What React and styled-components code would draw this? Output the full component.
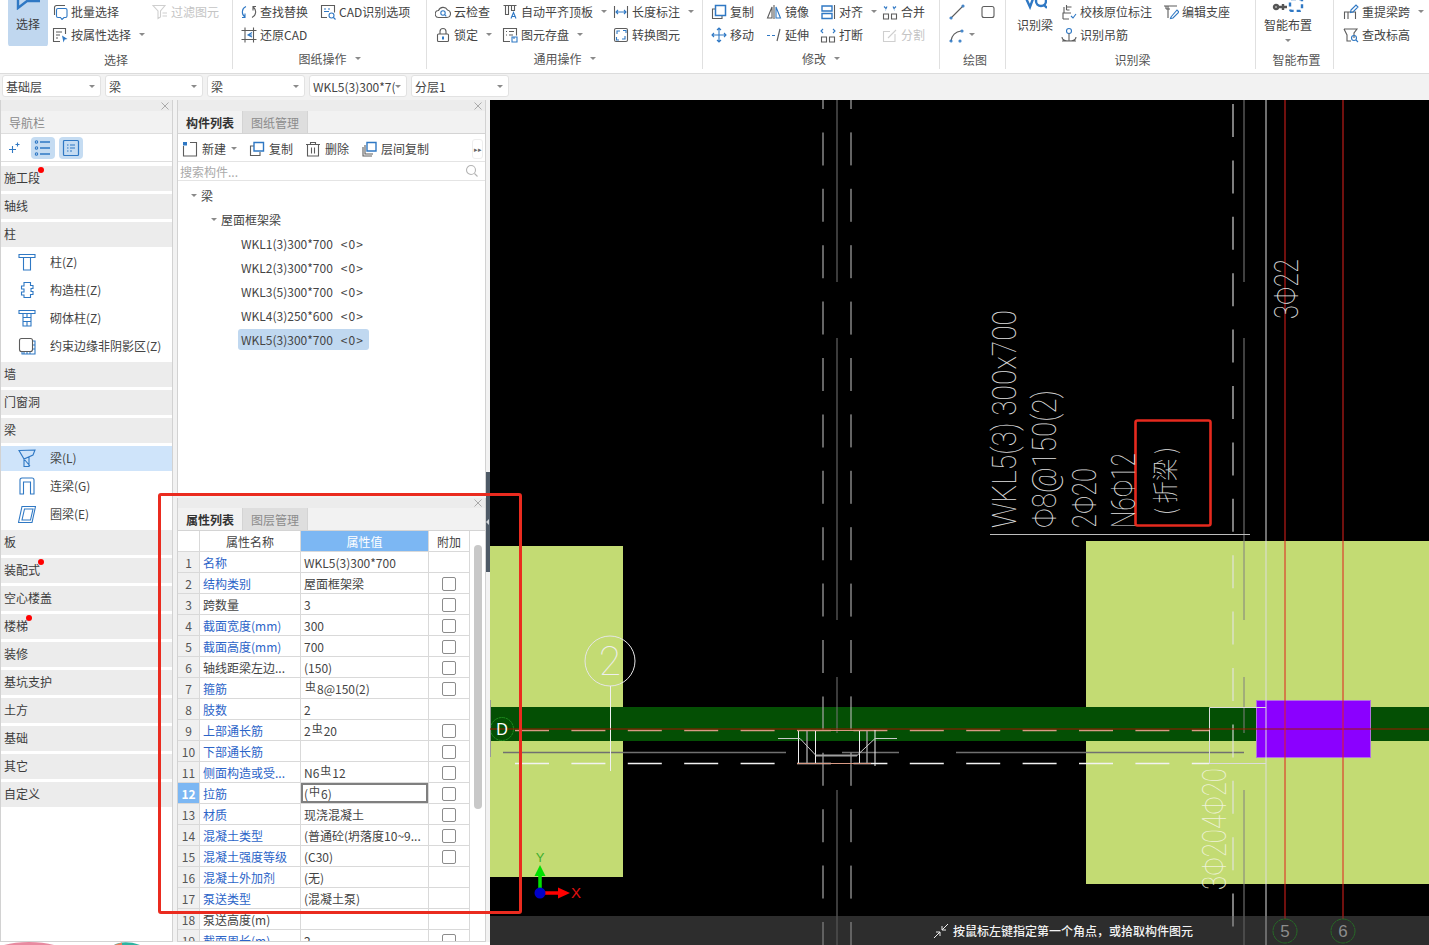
import React from "react";
import styled, { createGlobalStyle } from "styled-components";

const GlobalStyle = createGlobalStyle`
  html, body {
    margin: 0;
    padding: 0;
    background: #f2f2f2;
  }
  * {
    box-sizing: border-box;
  }
`;

const FONT = `"Noto Sans CJK SC", "Liberation Sans", sans-serif`;

const Page = styled.div`
  position: relative;
  width: 1429px;
  height: 945px;
  overflow: hidden;
  display: flex;
  flex-direction: column;
  font-family: ${FONT};
  font-size: 12px;
  color: #444;
  background: #f2f2f2;
`;

/* ---------- ribbon ---------- */

const Ribbon = styled.div`
  display: flex;
  height: 74px;
  flex: none;
  background: #fff;
  border-bottom: 1px solid #dcdcdc;
`;

const Group = styled.div`
  width: ${(p) => p.$w}px;
  flex: none;
  height: 69px;
  display: flex;
  flex-direction: column;
  border-right: ${(p) => (p.$last ? "none" : "1px solid #e0e0e0")};
`;

const GroupBody = styled.div`
  height: 46px;
  flex: none;
  display: flex;
  padding-left: ${(p) => p.$pl || 0}px;
  overflow: hidden;
`;

const GroupLabel = styled.div`
  flex: 1;
  display: flex;
  align-items: center;
  justify-content: center;
  gap: 8px;
  padding-top: ${(p) => (p.$caret ? 2 : 5)}px;
  padding-left: ${(p) => p.$shift || 0}px;
  line-height: 14px;
  color: #555;
`;

const Column = styled.div`
  width: ${(p) => p.$w}px;
  flex: none;
  display: flex;
  flex-direction: column;
`;

const ToolItem = styled.div`
  height: 23px;
  display: flex;
  align-items: center;
  gap: 3px;
  white-space: nowrap;
  line-height: 14px;
  color: ${(p) => (p.$off ? "#c4c4c4" : "#444")};
`;

const Caret = styled.span`
  width: 0;
  height: 0;
  flex: none;
  margin-left: ${(p) => p.$ml ?? 5}px;
  border-left: 3px solid transparent;
  border-right: 3px solid transparent;
  border-top: 3px solid #8a8a8a;
`;

const Glyph = styled.svg`
  width: ${(p) => p.$s || 16}px;
  height: ${(p) => p.$s || 16}px;
  flex: none;
  display: block;
  fill: none;
  stroke: ${(p) => (p.$off ? "#cfcfcf" : "#5c5c5c")};
  stroke-width: 1.1;
  .b {
    stroke: ${(p) => (p.$off ? "#cfcfcf" : "#2f78c4")};
  }
  .f {
    fill: #2f78c4;
    stroke: none;
  }
`;

const SelectButton = styled.div`
  width: 40px;
  height: 47px;
  flex: none;
  margin-right: 4px;
  background: #c0d7ef;
  border-radius: 0 0 4px 4px;
  display: flex;
  flex-direction: column;
  align-items: center;
  color: #3d3d3d;
`;

const BigTool = styled.div`
  width: ${(p) => p.$w}px;
  margin-right: ${(p) => p.$mr || 0}px;
  flex: none;
  display: flex;
  flex-direction: column;
  align-items: center;
  line-height: 15px;
  white-space: nowrap;
`;

const BigGlyph = styled.svg`
  width: ${(p) => p.$w}px;
  height: ${(p) => p.$h}px;
  flex: none;
  display: block;
  fill: none;
  stroke: #2f78c4;
  stroke-width: 2.4;
  margin-bottom: ${(p) => p.$mb || 0}px;
  .d {
    stroke: #555;
  }
`;

const SmartCaret = styled(Caret)`
  margin-top: 7px;
`;

/* ---------- selector strip ---------- */

const SelectBar = styled.div`
  height: 26px;
  flex: none;
  display: flex;
  gap: 4px;
  padding: 1px 0 0 2px;
  background: #f2f2f2;
`;

const Picker = styled.div`
  width: ${(p) => p.$w || 98}px;
  height: 22px;
  display: flex;
  align-items: center;
  justify-content: space-between;
  padding: 0 5px 0 3px;
  background: #fff;
  border: 1px solid #e2e2e2;
  border-radius: 3px;
  white-space: nowrap;
  overflow: hidden;
`;

const PickerText = styled.span`
  overflow: hidden;
  width: ${(p) => (p.$clip ? "82px" : "auto")};
`;

/* ---------- main area ---------- */

const Main = styled.div`
  flex: 1;
  min-height: 0;
  display: flex;
`;

const LeftArea = styled.div`
  position: relative;
  width: 490px;
  flex: none;
  display: flex;
  flex-direction: column;
`;

const PanelRow = styled.div`
  flex: 1;
  min-height: 0;
  display: flex;
  gap: 4px;
`;

const Wallpaper = styled.svg`
  display: block;
  width: 490px;
  height: 3px;
  flex: none;
  background: #fff;
`;

const NavPanel = styled.div`
  width: 173px;
  flex: none;
  background: #fff;
  border: 1px solid #d2d2d2;
  border-top: none;
  display: flex;
  flex-direction: column;
`;

const Strip = styled.div`
  height: ${(p) => p.$h || 11}px;
  flex: none;
  display: flex;
  align-items: center;
  justify-content: flex-end;
  padding-right: 3px;
  background: #ececec;
  color: #a8a8a8;
`;

const CloseGlyph = styled.svg`
  width: 8px;
  height: 8px;
  stroke: #aaa;
  stroke-width: 1;
  fill: none;
`;

const NavTitle = styled.div`
  height: 23px;
  flex: none;
  padding-left: 8px;
  display: flex;
  align-items: center;
  background: #f2f2f2;
  border-bottom: 1px solid #dedede;
  color: #8a8a8a;
`;

const NavTools = styled.div`
  height: 28px;
  flex: none;
  display: flex;
  align-items: center;
  padding-left: 7px;
  gap: 4px;
  border-bottom: 1px solid #dedede;
  margin-bottom: 4px;
`;

const NavToolButton = styled.div`
  width: 24px;
  height: 22px;
  display: flex;
  align-items: center;
  justify-content: center;
  background: #c5dcf2;
  border-radius: 4px;
  margin-left: ${(p) => p.$ml || 0}px;
`;

const NavSection = styled.div`
  position: relative;
  height: 25px;
  flex: none;
  margin-bottom: 3px;
  padding: 0 0 2px 3px;
  display: flex;
  align-items: center;
  background: #ececec;
  color: #3c3c3c;
`;

const RedDot = styled.span`
  position: absolute;
  top: 1px;
  left: ${(p) => p.$x}px;
  width: 6px;
  height: 6px;
  border-radius: 50%;
  background: #f00;
`;

const NavItem = styled.div`
  height: 25px;
  flex: none;
  margin-bottom: 3px;
  display: flex;
  align-items: center;
  padding: 0 0 2px 17px;
  gap: 14px;
  white-space: nowrap;
  background: ${(p) => (p.$active ? "#cfe4fa" : "transparent")};
`;

const MidColumn = styled.div`
  width: 309px;
  flex: none;
  display: flex;
  flex-direction: column;
  gap: 4px;
`;

const ListPanel = styled.div`
  flex: 1;
  min-height: 0;
  background: #fff;
  border-left: 1px solid #d2d2d2;
  border-right: 1px solid #d2d2d2;
  display: flex;
  flex-direction: column;
`;

const TabRow = styled.div`
  height: 23px;
  flex: none;
  display: flex;
  background: #f2f2f2;
  border-bottom: 1px solid #d4d4d4;
`;

const Tab = styled.div`
  width: ${(p) => p.$w}px;
  display: flex;
  align-items: center;
  justify-content: center;
  font-weight: ${(p) => (p.$on ? 700 : 400)};
  color: ${(p) => (p.$on ? "#333" : "#8c8c8c")};
  background: ${(p) => (p.$on ? "#f2f2f2" : "#dedede")};
  border-right: 1px solid #d4d4d4;
`;

const ListTools = styled.div`
  height: 28px;
  flex: none;
  display: flex;
  align-items: center;
  gap: 12px;
  padding: 2px 2px 0 4px;
  border-bottom: 1px solid #e4e4e4;
`;

const ListTool = styled.div`
  display: flex;
  align-items: center;
  gap: 4px;
  white-space: nowrap;
`;

const ExpandButton = styled.div`
  margin-left: auto;
  width: 11px;
  height: 20px;
  border: 1px solid #eee;
  border-radius: 3px;
  font-size: 7px;
  line-height: 18px;
  text-align: center;
  color: #666;
`;

const SearchRow = styled.div`
  height: 19px;
  flex: none;
  display: flex;
  align-items: center;
  justify-content: space-between;
  padding: 0 5px 0 2px;
  color: #aaa;
  border-bottom: 1px solid #e4e4e4;
`;

const Tree = styled.div`
  padding-top: 2px;
  display: flex;
  flex-direction: column;
`;

const TreeRow = styled.div`
  height: 24px;
  display: flex;
  align-items: center;
  gap: 4px;
  padding-left: ${(p) => p.$indent}px;
`;

const Leaf = styled.div`
  height: 21px;
  display: flex;
  align-items: center;
  gap: 8px;
  padding: 0 5px 0 3px;
  border-radius: 3px;
  background: ${(p) => (p.$on ? "#c0d8f0" : "transparent")};
`;

const Count = styled.span`
  font-size: 12px;
  letter-spacing: 1px;
`;

const AttrPanel = styled.div`
  height: 444px;
  flex: none;
  background: #fff;
  border-left: 1px solid #d2d2d2;
  border-right: 1px solid #d2d2d2;
  border-bottom: 1px solid #d2d2d2;
  display: flex;
  flex-direction: column;
  overflow: hidden;
`;

const AttrBody = styled.div`
  position: relative;
  flex: 1;
  min-height: 0;
  overflow: hidden;
`;

const PropRow = styled.div`
  display: grid;
  grid-template-columns: 22px 101px 128px 41px;
  height: 21px;
`;

const PropCell = styled.div`
  display: flex;
  align-items: center;
  padding-left: ${(p) => p.$pl ?? 3}px;
  justify-content: ${(p) => (p.$center ? "center" : "flex-start")};
  border-right: 1px solid #d9d9d9;
  border-bottom: 1px solid #d9d9d9;
  white-space: nowrap;
  overflow: hidden;
  color: ${(p) => (p.$link ? "#2c64c8" : "#444")};
`;

const HeadCell = styled(PropCell)`
  background: ${(p) => (p.$on ? "#7cb7f3" : "#fff")};
  color: ${(p) => (p.$on ? "#fff" : "#444")};
`;

const NumCell = styled(PropCell)`
  padding-left: 0;
  justify-content: center;
  background: ${(p) => (p.$on ? "#7cb7f3" : "#f0f0f0")};
  color: ${(p) => (p.$on ? "#fff" : "#555")};
  font-weight: ${(p) => (p.$on ? 700 : 400)};
`;

const ValueCell = styled(PropCell)`
  box-shadow: ${(p) => (p.$on ? "inset 0 0 0 2px #7f7f7f" : "none")};
`;

const Rebar = styled.span`
  font-size: 11px;
  position: relative;
  top: -2px;
  margin: 0 1px;
`;

const Check = styled.span`
  width: 14px;
  height: 14px;
  margin-top: 1px;
  border: 1px solid #8c8c8c;
  border-radius: 2px;
  background: #fff;
`;

const Thumb = styled.div`
  position: absolute;
  left: 296px;
  top: 14px;
  width: 8px;
  height: 264px;
  border-radius: 4px;
  background: #c8c8c8;
`;

const Splitter = styled.div`
  position: absolute;
  right: 0;
  top: 372px;
  width: 4px;
  height: 100px;
  background: #4e5a66;
  display: flex;
  align-items: center;

  &::after {
    content: "";
    border-top: 3px solid transparent;
    border-bottom: 3px solid transparent;
    border-right: 3px solid #cfd4d8;
  }
`;

/* ---------- canvas ---------- */

const Canvas = styled.div`
  position: relative;
  flex: 1;
  background: #000;
  overflow: hidden;
`;

const Drawing = styled.svg`
  display: block;
  width: 939px;
  height: 845px;
`;

const CadText = styled.text`
  font-family: Roboto, "Liberation Sans", sans-serif;
  font-weight: 100;
  fill: ${(p) => p.$c || "#e0e0e0"};
`;

const CadCjk = styled(CadText)`
  font-family: "Noto Sans CJK SC", sans-serif;
  font-weight: 100;
`;

const StatusBar = styled.div`
  position: absolute;
  left: 0;
  right: 0;
  bottom: 0;
  height: 29px;
  display: flex;
  align-items: center;
  gap: 4px;
  padding-left: 443px;
  color: #f2f2f2;
  font-weight: 500;
`;

const RedFrame = styled.div`
  position: absolute;
  left: 158px;
  top: 493px;
  width: 364px;
  height: 421px;
  border: 3px solid #ea2b1f;
  border-radius: 3px;
  pointer-events: none;
`;

/* ---------- icons ---------- */

const icons = {
  batch: (
    <>
      <path d="M2.500 11V3.500a2 2 0 0 1 2-2H13" />
      <path className="b" d="M6 4.500h7.500a1.500 1.500 0 0 1 1.500 1.500v6a1.500 1.500 0 0 1-1.500 1.500H12l-2 2-1.500-2H6A1.500 1.500 0 0 1 4.500 12V6A1.500 1.500 0 0 1 6 4.500z" />
    </>
  ),
  attr: (
    <>
      <path d="M13.500 7V1.500h-12v13H8" />
      <path d="M4 5h6M4 8h4M4 11h2" />
      <path className="f" d="M10 8.500l5.500 3.500-2.800.6-1.200 2.900z" />
    </>
  ),
  filter: <path d="M1 1.500h12L8.500 7v6L6 14.500V7zM10.500 9H15M10.500 12H15" />,
  replace: (
    <>
      <path className="b" d="M5 2.500A6 6 0 0 0 4 13M4 9.500V13.500H1" />
      <path d="M11 13.500A6 6 0 0 0 12 3M12 6.500V2.500h3" />
    </>
  ),
  restore: (
    <>
      <path d="M4 .5v15M12.500.5v15M.5 3.500h15M.5 12.500h15" />
      <path className="b" d="M11 5.500L7 8l4 2M7 8h4" />
    </>
  ),
  cadOpt: (
    <>
      <path d="M7 13.500H1.500v-12h13v7" />
      <path className="b" d="M4 5h2M8 5h2M4 7.500h5" />
      <circle className="b" cx="11.500" cy="11.500" r="2.500" />
      <path className="b" d="M13.500 13.500l2 2" />
    </>
  ),
  cloud: (
    <>
      <path d="M4 13.500a3.500 3.500 0 0 1-.5-7A5 5 0 0 1 12.500 6a3.800 3.800 0 0 1-.5 7.500z" />
      <circle className="b" cx="8" cy="9" r="2.200" />
      <path className="b" d="M9.800 10.800l1.500 1.500" />
    </>
  ),
  lock: (
    <>
      <path d="M5 7V4.500a3 3 0 0 1 6 0V7" />
      <rect x="2.500" y="7" width="11" height="7.500" rx="1" />
      <path className="f" d="M7 9.500h2v3H7z" />
    </>
  ),
  align: (
    <>
      <path d="M1.500 1.500h13M3.500 1.500v9h3v-9M9.500 1.500v5h3v-5" />
      <path className="b" d="M9 14.500l2.500-6 2.500 6M10 12.500h3" />
    </>
  ),
  save: (
    <>
      <path d="M8 14.500H1.500v-13h13v7" />
      <path d="M4 4.500h1M7 4.500h5M4 8h1M7 8h4" />
      <path className="b" d="M10 10h5v5h-5zM12 10v2" />
    </>
  ),
  dim: (
    <>
      <path d="M1.500 2v12M14.500 2v12" />
      <path className="b" d="M3 8h10M5 6L3 8l2 2M11 6l2 2-2 2" />
    </>
  ),
  convert: (
    <>
      <rect x="1.500" y="1.500" width="13" height="13" rx="1.500" />
      <path className="b" d="M4 7V4h3M12 9v3H9M10 3.500h3V6M3.500 10v3H6" />
    </>
  ),
  copy: (
    <>
      <path d="M4 5H1.500v9.500H11V12" />
      <path className="b" strokeWidth="1.500" d="M4.500 1.500h10v10h-10z" />
    </>
  ),
  mirror: (
    <>
      <path d="M8 1v14" />
      <path d="M6 3L1.500 14H6z" />
      <path className="b" d="M10 3l4.500 11H10z" />
    </>
  ),
  alignH: (
    <>
      <path d="M14.500 1v14" />
      <path className="b" strokeWidth="1.400" d="M2 2h10v5H2zM2 9.500h10v5H2z" />
    </>
  ),
  merge: (
    <>
      <path d="M1.500 10h5v5h-5zM9.500 10h5v5h-5z" />
      <path className="b" d="M2 2.500l2 2 1-2M14 2.500l-2 2-1-2M3 6h.5M12.500 6h.5" />
    </>
  ),
  move: <path className="b" d="M8 1v14M1 8h14M6 3l2-2 2 2M6 13l2 2 2-2M3 6L1 8l2 2M13 6l2 2-2 2" />,
  extend: (
    <>
      <path className="b" d="M1 8.500h3M6 8.500h3" />
      <path d="M11 14L14 2" />
    </>
  ),
  split: (
    <>
      <path d="M1.500 10h5v5h-5zM9.500 10h5v5h-5z" />
      <path className="b" d="M3 2L1 4l2 2M13 2l2 2-2 2" />
    </>
  ),
  divide: <path d="M13 7v7.500H1.500v-10H8M6 11l2-2 6-6" />,
  line: (
    <>
      <path d="M2.500 13.500L13.500 2.500" />
      <circle className="b" cx="2" cy="14" r="1" />
      <circle className="b" cx="14" cy="2" r="1" />
    </>
  ),
  rect: <rect x="2" y="2.500" width="12" height="11" rx="2" />,
  arc: (
    <>
      <path d="M2 14a11 11 0 0 1 10-10" />
      <circle className="b" cx="2" cy="14" r="1" />
      <circle className="b" cx="13" cy="4" r="1" />
      <circle className="b" cx="11" cy="14" r="1" />
    </>
  ),
  verify: (
    <>
      <path d="M2 15V9h8M3 9V3M5.500 1v5M5.500 3h5M5.500 6h3M2 15h6" />
      <path className="b" d="M10 12l2 2 3-4" />
    </>
  ),
  hanger: (
    <>
      <circle className="b" cx="8" cy="4" r="2.500" />
      <path d="M8 6.500V14M1 10c0 3 3 4 7 4s7-1 7-4M1 14h4M11 14h4" />
    </>
  ),
  support: (
    <>
      <path d="M1 2h13M3 2v3M3 5h4M5 2v12" />
      <path className="b" d="M8 13l6-7 2 2-6 6-2.500.500z" />
    </>
  ),
  respan: (
    <>
      <path d="M1.500 15V8h11v7M5 8v7" />
      <path className="b" d="M8 6l5-5 2 2-5 5-2.500.500z" />
    </>
  ),
  level: (
    <>
      <path d="M1 2h13l-3 4v5M1 2l3 6v6h4" />
      <circle className="b" cx="11" cy="11" r="2.500" />
      <path className="b" d="M13 13l2 2" />
    </>
  ),
  newDoc: (
    <>
      <path d="M1.500 5v10h13V1.500H8" />
      <path className="f" d="M1 1h4v3.500H1z" />
    </>
  ),
  listCopy: (
    <>
      <path d="M5 5H1.500v9.500H11V11" />
      <path className="b" strokeWidth="1.400" d="M5 1.500h9.500V10H5z" />
    </>
  ),
  trash: <path d="M1 3.500h14M5.500 3.500V1.500h5v2M2.500 3.500v11.500h11V3.500M6.500 6.500v6M9.500 6.500v6" />,
  floorCopy: (
    <>
      <path d="M2 6v9h9M4 4v9h8" />
      <path className="b" strokeWidth="1.400" d="M6 1.500h9V10H6z" />
    </>
  ),
  search: (
    <>
      <circle cx="7" cy="7" r="4.500" stroke="#b4b4b4" />
      <path d="M10.500 10.500l3 3" stroke="#b4b4b4" />
    </>
  ),
  column: (
    <path className="b" d="M1 1.500h16v3H1zM5 4.500h8M5.500 4.500V17h7V4.500" />
  ),
  constr: (
    <path className="b" d="M6 1.500h6.500v3H15v3h-2v3h2v3h-2.500v3H6v-2.500H3.500v-3H6v-3H3.500v-3H6z" />
  ),
  masonry: (
    <path className="b" d="M1 1.500h16v3H1zM5 4.500V17h8V4.500M5 8.500h8M5 12.500h8M9 4.500v4M9 12.500v4.500" />
  ),
  edge: (
    <>
      <rect x="1.500" y="1.500" width="13" height="13" rx="2" />
      <path className="b" d="M15 4h2v13H4v-2M6 15v2M9 15v2M12 15v2M15 8h2M15 12h2" />
    </>
  ),
  beam: (
    <path className="b" d="M1 1.500L17 1l-2 5-9 4zM1 1.500l5 8.500v7.500h5V8M6 10l6 7" />
  ),
  coupling: <path className="b" d="M2 17V3a2 2 0 0 1 2-2h10a2 2 0 0 1 2 2v14h-3.500V5h-7v12z" />,
  ring: <path className="b" d="M4 1.500h13.500L14 17.500H.5zM6.500 4H15l-2.500 11H4z" />,
  star: <path className="b" d="M4.500 6v7M1 9.500h7M9.500 2.500v4M7.500 4.500h4" />,
  list: (
    <>
      <path className="b" strokeWidth="1.300" d="M6 3h10M6 9h10M6 15h10" />
      <circle className="b" cx="2.500" cy="3" r="1.200" />
      <circle className="b" cx="2.500" cy="9" r="1.200" />
      <circle className="b" cx="2.500" cy="15" r="1.200" />
    </>
  ),
  detail: <path className="b" strokeWidth="1.200" d="M2.500 1.500h13a1 1 0 0 1 1 1v13a1 1 0 0 1-1 1h-13a1 1 0 0 1-1-1v-13a1 1 0 0 1 1-1zM5 6h1.500M8 6h5M5 9h1.500M8 9h5M5 12h1.500M8 12h2" />,
};

const Icon = ({ name, size = 16, off }) => (
  <Glyph viewBox={`0 0 ${size} ${size}`} $s={size} $off={off}>
    {icons[name]}
  </Glyph>
);

const Tool = ({ icon, label, caret, off }) => (
  <ToolItem $off={off}>
    <Icon name={icon} off={off} />
    {label}
    {caret && <Caret $ml={5} />}
  </ToolItem>
);

const Close = () => (
  <CloseGlyph viewBox="0 0 8 8">
    <path d="M.5.5l7 7M7.500.5l-7 7" />
  </CloseGlyph>
);

/* ---------- data ---------- */

const navList = [
  { label: "施工段", dot: 37 },
  { label: "轴线" },
  { label: "柱" },
  { label: "柱(Z)", icon: "column" },
  { label: "构造柱(Z)", icon: "constr" },
  { label: "砌体柱(Z)", icon: "masonry" },
  { label: "约束边缘非阴影区(Z)", icon: "edge" },
  { label: "墙" },
  { label: "门窗洞" },
  { label: "梁" },
  { label: "梁(L)", icon: "beam", active: true },
  { label: "连梁(G)", icon: "coupling" },
  { label: "圈梁(E)", icon: "ring" },
  { label: "板" },
  { label: "装配式", dot: 37 },
  { label: "空心楼盖" },
  { label: "楼梯", dot: 25 },
  { label: "装修" },
  { label: "基坑支护" },
  { label: "土方" },
  { label: "基础" },
  { label: "其它" },
  { label: "自定义" },
];

const beams = [
  "WKL1(3)300*700",
  "WKL2(3)300*700",
  "WKL3(5)300*700",
  "WKL4(3)250*600",
  "WKL5(3)300*700",
];

const props = [
  ["名称", "WKL5(3)300*700", true, false],
  ["结构类别", "屋面框架梁", true, true],
  ["跨数量", "3", false, true],
  ["截面宽度(mm)", "300", true, true],
  ["截面高度(mm)", "700", true, true],
  ["轴线距梁左边...", "(150)", false, true],
  ["箍筋", "虫8@150(2)", true, true],
  ["肢数", "2", true, false],
  ["上部通长筋", "2虫20", true, true],
  ["下部通长筋", "", true, true],
  ["侧面构造或受...", "N6虫12", true, true],
  ["拉筋", "(中6)", true, true],
  ["材质", "现浇混凝土", true, true],
  ["混凝土类型", "(普通砼(坍落度10~9...", true, true],
  ["混凝土强度等级", "(C30)", true, true],
  ["混凝土外加剂", "(无)", true, false],
  ["泵送类型", "(混凝土泵)", true, false],
  ["泵送高度(m)", "", false, false],
  ["截面周长(m)", "2", true, true],
];

const renderValue = (text) =>
  text
    .split(/([虫中])/)
    .map((part, i) =>
      part === "虫" || part === "中" ? <Rebar key={i}>{part}</Rebar> : part
    );

/* ---------- canvas drawing, in page coordinates ---------- */

const DASH = "33 23.4";

const CadDrawing = () => (
  <Drawing viewBox="490 100 939 845">
    <rect x="490" y="100" width="939" height="845" fill="#000" />
    <rect x="490" y="546" width="133" height="331" fill="#c3db73" />
    <rect x="1086" y="541" width="343" height="343" fill="#c3db73" />
    <rect x="490" y="707" width="939" height="34" fill="#044f04" />
    <rect x="1256.500" y="700.500" width="114" height="57" fill="#8b00ff" stroke="#b070e0" />
    <rect x="490" y="916" width="939" height="29" fill="#2d2d2d" />

    {/* gridlines */}
    <g fill="none">
      <path d="M515 730.500H1209" stroke="#d89a84" strokeDasharray="34 22.400" strokeWidth="1.300" />
      <path d="M515 763.500H1209" stroke="#f2f2f2" strokeDasharray="34 22.400" strokeWidth="1.300" />
      <path d="M503 752.500H786M842 752.500H899M956 752.500H1244" stroke="#707070" strokeWidth="1.600" />

      <path d="M823 76V945" stroke="#a8a8a8" strokeWidth="1.200" strokeDasharray={DASH} />
      <path d="M851 76V945" stroke="#c8c8c8" strokeDasharray={DASH} />
      <path d="M837 100V282M837 338V620M837 677V733M837 790V945" stroke="#777" />
      <path d="M1233 104V945" stroke="#e4e4e4" strokeWidth="1.100" strokeDasharray={DASH} />
      <path d="M1244 100V282M1244 338V620M1244 677V733M1244 790V945" stroke="#808080" />
      <path d="M1266 100V945" stroke="#dedede" />

      {/* beam detail */}
      <path d="M1209.500 763V707.500H1266M1209 763.500H1266" stroke="#dcdcdc" />
      <path d="M798.500 730V763M815.500 730V763M859.500 730V763M875 730V766" stroke="#f0f0f0" />
      <path d="M807 730V763M867 730V763" stroke="#a0a0a0" strokeWidth="1.400" />
      <path d="M797 763.500H871M797 730.500H871" stroke="#d89a84" />
      <path d="M778 738.500H800L816 755.500H857L875 738.500H897" stroke="#c8c8c8" />
      <path d="M816 755.500H857" stroke="#a0a0a0" strokeWidth="2" />

      {/* axis bubbles */}
      <circle cx="610" cy="661" r="25" stroke="#e6e6e6" />
      <path d="M610.500 686V771" stroke="#f0f0f0" />
      <circle cx="502" cy="729" r="11.500" stroke="#1d8a1d" strokeDasharray="3 .6" />
      <path d="M490.500 700V757" stroke="#999" />

      {/* red axes */}
      <path d="M490 729H1429" stroke="#9c1800" />
      <path d="M1285 100V919M1343 100V919" stroke="#e0201c" />

      {/* leader */}
      <path d="M990 534.500H1250" stroke="#bdbdbd" />
      <rect x="1135.500" y="420.500" width="75" height="105" rx="2" stroke="#e62a1e" strokeWidth="2.600" />
    </g>

    <rect x="490" y="916" width="939" height="29" fill="#2d2d2d" opacity=".3" />
    <circle cx="1285" cy="931" r="12" fill="#2d2d2d" stroke="#276a27" strokeDasharray="5 .5" />
    <circle cx="1343" cy="931" r="12" fill="#2d2d2d" stroke="#276a27" strokeDasharray="5 .5" />

    <CadText x="610" y="675" fontSize="40" textAnchor="middle" $c="#eee">2</CadText>
    <text x="502" y="735" fontSize="16" textAnchor="middle" fill="#fff" fontFamily="Liberation Sans">D</text>
    <text x="1285" y="937" fontSize="17" textAnchor="middle" fill="#8c8c8c" fontFamily="Liberation Sans">5</text>
    <text x="1343" y="937" fontSize="17" textAnchor="middle" fill="#8c8c8c" fontFamily="Liberation Sans">6</text>

    <CadText transform="translate(1016 528) rotate(-90)" fontSize="33" textLength="218" lengthAdjust="spacingAndGlyphs">WKL5(3) 300x700</CadText>
    <CadText transform="translate(1056 528) rotate(-90)" fontSize="33" textLength="138" lengthAdjust="spacingAndGlyphs">Φ8@150(2)</CadText>
    <CadText transform="translate(1096 528) rotate(-90)" fontSize="33" textLength="60" lengthAdjust="spacingAndGlyphs">2Φ20</CadText>
    <CadText transform="translate(1135 528) rotate(-90)" fontSize="33" textLength="75" lengthAdjust="spacingAndGlyphs">N6Φ12</CadText>
    <CadCjk transform="translate(1175 515) rotate(-90)" fontSize="26" textLength="68" lengthAdjust="spacingAndGlyphs">( 折梁 )</CadCjk>
    <CadText transform="translate(1298 319) rotate(-90)" fontSize="33" textLength="60" lengthAdjust="spacingAndGlyphs">3Φ22</CadText>
    <CadText transform="translate(1226 890) rotate(-90)" fontSize="33" textLength="122" lengthAdjust="spacingAndGlyphs" $c="#eef2d8">3Φ204Φ20</CadText>

    {/* origin marker */}
    <path d="M540 893V875" stroke="#00e000" strokeWidth="3.500" />
    <path d="M534.500 876L540 865L545.500 876z" fill="#00e000" />
    <path d="M540 893H560" stroke="#f00" strokeWidth="3.500" />
    <path d="M558 887.500L570 893L558 898.500z" fill="#f00" />
    <circle cx="540" cy="893" r="5.500" fill="#0000c8" />
    <text x="540" y="862" fontSize="13" textAnchor="middle" fill="#3fae2e" fontFamily="Liberation Sans">Y</text>
    <text x="576" y="898" fontSize="15" textAnchor="middle" fill="#e01010" fontFamily="Liberation Sans">X</text>
  </Drawing>
);

/* ---------- page ---------- */

export default function App() {
  return (
    <Page>
      <GlobalStyle />
      <Ribbon>
        <Group $w={233}>
          <GroupBody $pl={8}>
            <SelectButton>
              <BigGlyph viewBox="0 0 24 10" $w={24} $h={10} $mb={5}>
                <path d="M2 -6V8L11 1H23V-6" />
              </BigGlyph>
              选择
            </SelectButton>
            <Column $w={100}>
              <Tool icon="batch" label="批量选择" />
              <Tool icon="attr" label="按属性选择" caret />
            </Column>
            <Column $w={80}>
              <Tool icon="filter" label="过滤图元" off />
            </Column>
          </GroupBody>
          <GroupLabel>选择</GroupLabel>
        </Group>

        <Group $w={194}>
          <GroupBody $pl={8}>
            <Column $w={79}>
              <Tool icon="replace" label="查找替换" />
              <Tool icon="restore" label="还原CAD" />
            </Column>
            <Column $w={100}>
              <Tool icon="cadOpt" label="CAD识别选项" />
            </Column>
          </GroupBody>
          <GroupLabel $caret>
            图纸操作
            <Caret $ml={0} />
          </GroupLabel>
        </Group>

        <Group $w={276}>
          <GroupBody $pl={8}>
            <Column $w={67}>
              <Tool icon="cloud" label="云检查" />
              <Tool icon="lock" label="锁定" caret />
            </Column>
            <Column $w={111}>
              <Tool icon="align" label="自动平齐顶板" caret />
              <Tool icon="save" label="图元存盘" caret />
            </Column>
            <Column $w={85}>
              <Tool icon="dim" label="长度标注" caret />
              <Tool icon="convert" label="转换图元" />
            </Column>
          </GroupBody>
          <GroupLabel $caret>
            通用操作
            <Caret $ml={0} />
          </GroupLabel>
        </Group>

        <Group $w={237}>
          <GroupBody $pl={8}>
            <Column $w={55}>
              <Tool icon="copy" label="复制" />
              <Tool icon="move" label="移动" />
            </Column>
            <Column $w={54}>
              <Tool icon="mirror" label="镜像" />
              <Tool icon="extend" label="延伸" />
            </Column>
            <Column $w={62}>
              <Tool icon="alignH" label="对齐" caret />
              <Tool icon="split" label="打断" />
            </Column>
            <Column $w={50}>
              <Tool icon="merge" label="合并" />
              <Tool icon="divide" label="分割" off />
            </Column>
          </GroupBody>
          <GroupLabel $caret>
            修改
            <Caret $ml={0} />
          </GroupLabel>
        </Group>

        <Group $w={66}>
          <GroupBody $pl={9}>
            <Column $w={31}>
              <ToolItem>
                <Icon name="line" />
              </ToolItem>
              <ToolItem>
                <Icon name="arc" />
                <Caret $ml={1} />
              </ToolItem>
            </Column>
            <Column $w={20}>
              <ToolItem>
                <Icon name="rect" />
              </ToolItem>
            </Column>
          </GroupBody>
          <GroupLabel $shift={5}>绘图</GroupLabel>
        </Group>

        <Group $w={250}>
          <GroupBody $pl={11}>
            <BigTool $w={36} $mr={8}>
              <BigGlyph viewBox="0 0 24 10" $w={24} $h={10} $mb={7}>
                <path d="M2 -4L7 7L11 -4" />
                <circle cx="18" cy="1" r="5" />
                <path d="M21 5l3 3" />
              </BigGlyph>
              <span>识别梁</span>
            </BigTool>
            <Column $w={102}>
              <Tool icon="verify" label="校核原位标注" />
              <Tool icon="hanger" label="识别吊筋" />
            </Column>
            <Column $w={80}>
              <Tool icon="support" label="编辑支座" />
            </Column>
          </GroupBody>
          <GroupLabel $shift={4}>识别梁</GroupLabel>
        </Group>

        <Group $w={78}>
          <GroupBody>
            <BigTool $w={64}>
              <BigGlyph viewBox="0 0 32 12" $w={32} $h={12} $mb={5}>
                <circle className="d" cx="4" cy="7" r="2" />
                <path className="d" d="M6 7h9M11 4v6" />
                <rect x="18" y="-1" width="12" height="12" rx="2" strokeDasharray="4 3" />
              </BigGlyph>
              <span>智能布置</span>
              <SmartCaret $ml={0} />
            </BigTool>
          </GroupBody>
          <GroupLabel $shift={4}>智能布置</GroupLabel>
        </Group>

        <Group $w={95} $last>
          <GroupBody $pl={9}>
            <Column $w={85}>
              <Tool icon="respan" label="重提梁跨" caret />
              <Tool icon="level" label="查改标高" />
            </Column>
          </GroupBody>
        </Group>
      </Ribbon>

      <SelectBar>
        <Picker $w={99}>
          基础层
          <Caret />
        </Picker>
        <Picker>
          梁
          <Caret />
        </Picker>
        <Picker>
          梁
          <Caret />
        </Picker>
        <Picker>
          <PickerText $clip>WKL5(3)300*7(</PickerText>
          <Caret $ml={0} />
        </Picker>
        <Picker>
          分层1
          <Caret />
        </Picker>
      </SelectBar>

      <Main>
        <LeftArea>
          <PanelRow>
            <NavPanel>
              <Strip>
                <Close />
              </Strip>
              <NavTitle>导航栏</NavTitle>
              <NavTools>
                <Icon name="star" />
                <NavToolButton $ml={3}>
                  <Icon name="list" size={18} />
                </NavToolButton>
                <NavToolButton>
                  <Icon name="detail" size={18} />
                </NavToolButton>
              </NavTools>
              {navList.map((n) =>
                n.icon ? (
                  <NavItem key={n.label} $active={n.active}>
                    <Icon name={n.icon} size={18} />
                    {n.label}
                  </NavItem>
                ) : (
                  <NavSection key={n.label}>
                    {n.label}
                    {n.dot && <RedDot $x={n.dot} />}
                  </NavSection>
                )
              )}
            </NavPanel>

            <MidColumn>
              <ListPanel>
                <Strip>
                  <Close />
                </Strip>
                <TabRow>
                  <Tab $w={65} $on>
                    构件列表
                  </Tab>
                  <Tab $w={65}>图纸管理</Tab>
                </TabRow>
                <ListTools>
                  <ListTool>
                    <Icon name="newDoc" />
                    新建
                    <Caret $ml={1} />
                  </ListTool>
                  <ListTool>
                    <Icon name="listCopy" />
                    复制
                  </ListTool>
                  <ListTool>
                    <Icon name="trash" />
                    删除
                  </ListTool>
                  <ListTool>
                    <Icon name="floorCopy" />
                    层间复制
                  </ListTool>
                  <ExpandButton>▸▸</ExpandButton>
                </ListTools>
                <SearchRow>
                  搜索构件...
                  <Icon name="search" />
                </SearchRow>
                <Tree>
                  <TreeRow $indent={13}>
                    <Caret $ml={0} />
                    梁
                  </TreeRow>
                  <TreeRow $indent={33}>
                    <Caret $ml={0} />
                    屋面框架梁
                  </TreeRow>
                  {beams.map((b, i) => (
                    <TreeRow key={b} $indent={60}>
                      <Leaf $on={i === 4}>
                        {b}
                        <Count>&lt;0&gt;</Count>
                      </Leaf>
                    </TreeRow>
                  ))}
                </Tree>
              </ListPanel>

              <AttrPanel>
                <Strip $h={10}>
                  <Close />
                </Strip>
                <TabRow>
                  <Tab $w={65} $on>
                    属性列表
                  </Tab>
                  <Tab $w={65}>图层管理</Tab>
                </TabRow>
                <AttrBody>
                  <PropRow>
                    <HeadCell />
                    <HeadCell $center $pl={0}>
                      属性名称
                    </HeadCell>
                    <HeadCell $center $pl={0} $on>
                      属性值
                    </HeadCell>
                    <HeadCell $center $pl={0}>
                      附加
                    </HeadCell>
                  </PropRow>
                  {props.map(([name, value, link, check], i) => (
                    <PropRow key={name}>
                      <NumCell $on={i === 11}>{i + 1}</NumCell>
                      <PropCell $link={link}>{name}</PropCell>
                      <ValueCell $on={i === 11}>{renderValue(value)}</ValueCell>
                      <PropCell $center $pl={0}>
                        {check && <Check />}
                      </PropCell>
                    </PropRow>
                  ))}
                  <Thumb />
                </AttrBody>
              </AttrPanel>
            </MidColumn>
          </PanelRow>
          <Wallpaper viewBox="0 0 490 3">
            <path d="M4 3C18 -1 40 -1 54 3z" fill="#e88aa0" />
            <path d="M114 3C120 0 128 -1 140 3z" fill="#2fb3a0" />
            <path d="M114 3L122 .5V3z" fill="#f08060" />
          </Wallpaper>
          <Splitter />
        </LeftArea>

        <Canvas>
          <CadDrawing />
          <StatusBar>
            <svg width="16" height="16" viewBox="0 0 16 16" fill="none" stroke="#eee">
              <path d="M1 15l6-6M3 9h4v4M15 1L9 7M9 3v4h4" />
            </svg>
            按鼠标左键指定第一个角点，或拾取构件图元
          </StatusBar>
        </Canvas>
      </Main>
      <RedFrame />
    </Page>
  );
}
